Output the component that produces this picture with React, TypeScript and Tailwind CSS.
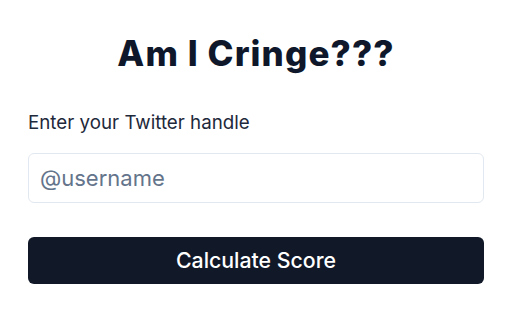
import React from "react";

export default function App() {
  return (
    <div
      className="min-h-screen w-full bg-white px-7 pt-[33px]"
      style={{ fontFamily: "Inter, 'Noto Sans', sans-serif" }}
    >
      <h1 className="text-center text-[35px] leading-[40px] font-extrabold tracking-[1.1px] text-[#0f172a]">
        Am I Cringe???
      </h1>
      <label
        htmlFor="handle"
        className="mt-9 block text-[18.75px] leading-[28px] text-[#1e293b]"
      >
        Enter your Twitter handle
      </label>
      <input
        id="handle"
        type="text"
        placeholder="@username"
        className="mt-4 block h-[50px] w-full rounded-md border border-[#e2e8f0] bg-white pl-[11px] pr-3 text-[22px] text-[#0f172a] outline-none placeholder:text-[#64748b]"
      />
      <button
        type="button"
        className="mt-[34px] flex h-[47px] w-full items-center justify-center rounded-md bg-[#111827] text-[21.3px] font-medium text-white"
      >
        Calculate Score
      </button>
    </div>
  );
}
